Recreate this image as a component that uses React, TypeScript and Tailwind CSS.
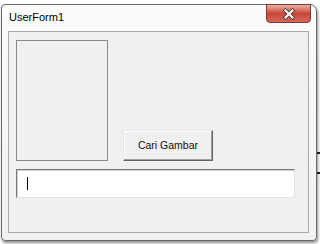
import React from "react";

export default function App() {
  return (
    <div className="w-[320px] h-[244px] bg-white relative overflow-hidden" style={{ fontFamily: '"Liberation Sans", Arial, sans-serif' }}>
      {/* background resize handle lines at right */}
      <div className="absolute left-[316px] top-[152px] w-[4px] h-[2px] bg-[#222]" />
      <div className="absolute left-[316px] top-[172px] w-[4px] h-[2px] bg-[#222]" />
      <div className="pt-[4px] pl-[1px]">
        <div className="relative w-[316px] h-[237px] border border-[#6a6a6a] rounded-tl-[4px] rounded-tr-[7px] rounded-b-[4px] bg-gradient-to-b from-[#fbfbfb] to-[#f1f1f1] shadow-[1px_2px_3px_rgba(0,0,0,0.45)] flex flex-col">
          {/* title bar */}
          <div className="h-[26px] flex items-start pl-[7px] pt-[6px]">
            <span className="text-[11px] leading-[13px] text-black">UserForm1</span>
          </div>
          {/* close button */}
          <div className="absolute left-[264px] top-[-1px] w-[45px] h-[19px] rounded-b-[4px] border border-[#7a3a32] bg-gradient-to-b from-[#eab0a4] via-[#c9453a] to-[#d6685a] flex items-center justify-center">
            <svg width="16" height="12" viewBox="0 0 16 12">
              <path d="M4.5 2.5 L11.5 9.5 M11.5 2.5 L4.5 9.5" stroke="#3a3a3a" strokeWidth="3.6" strokeLinecap="square" />
              <path d="M4.5 2.5 L11.5 9.5 M11.5 2.5 L4.5 9.5" stroke="#ffffff" strokeWidth="2" strokeLinecap="square" />
            </svg>
          </div>
          {/* client area */}
          <div className="ml-[6px] w-[301px] h-[202px] border border-[#a9a9a9] bg-[#f0f0f0] pl-[7px] pt-[8px]">
            <div className="flex items-end">
              <div className="w-[92px] h-[121px] border border-[#8a8a8a] bg-[#f0f0f0]" />
              <div className="ml-[15px] w-[90px] h-[31px] bg-[#f0f0f0] border-t border-l border-[#e6e6e6] border-r border-b border-r-[#646464] border-b-[#646464] shadow-[inset_-1px_-1px_0_#a0a0a0,inset_1px_1px_0_#ffffff] flex items-center justify-center">
                <span className="text-[10.5px] text-[#111] leading-none">Cari Gambar</span>
              </div>
            </div>
            <div className="mt-[8px] w-[279px] h-[29px] bg-white border-t border-l border-[#7a7a7a] border-r border-b border-r-[#e3e3e3] border-b-[#e3e3e3] shadow-[inset_1px_1px_0_#d0d0d0] flex items-center pl-[10px]">
              <div className="w-[1px] h-[13px] bg-black" />
            </div>
          </div>
        </div>
      </div>
    </div>
  );
}
